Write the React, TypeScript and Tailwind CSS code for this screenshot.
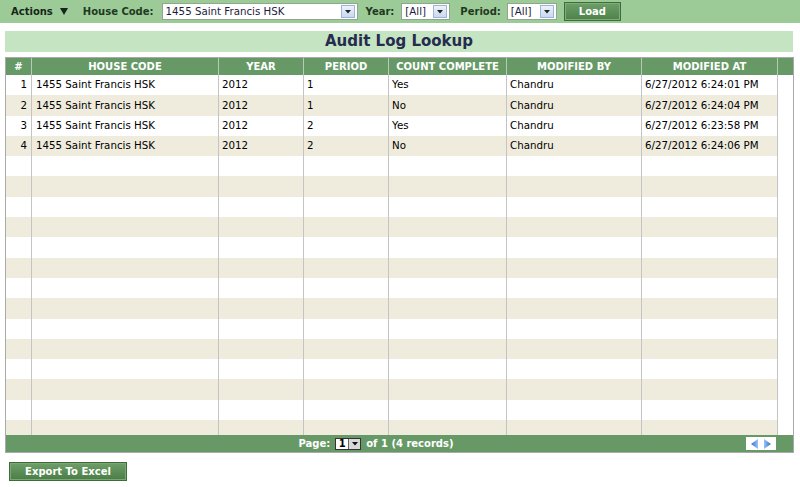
import React from "react";

const cols = [
  { w: "w-[26px]", label: "#" },
  { w: "w-[187px]", label: "HOUSE CODE" },
  { w: "w-[85px]", label: "YEAR" },
  { w: "w-[85px]", label: "PERIOD" },
  { w: "w-[118px]", label: "COUNT COMPLETE" },
  { w: "w-[135px]", label: "MODIFIED BY" },
  { w: "w-[136px]", label: "MODIFIED AT" },
];

const data = [
  ["1", "1455 Saint Francis HSK", "2012", "1", "Yes", "Chandru", "6/27/2012 6:24:01 PM"],
  ["2", "1455 Saint Francis HSK", "2012", "1", "No", "Chandru", "6/27/2012 6:24:04 PM"],
  ["3", "1455 Saint Francis HSK", "2012", "2", "Yes", "Chandru", "6/27/2012 6:23:58 PM"],
  ["4", "1455 Saint Francis HSK", "2012", "2", "No", "Chandru", "6/27/2012 6:24:06 PM"],
];

function DropBtn() {
  return (
    <div className="w-[14px] h-[13px] mr-[2px] border border-[#9fb4d6] bg-gradient-to-b from-[#eef3fb] to-[#c9d8ef] flex items-center justify-center">
      <svg width="6" height="4" viewBox="0 0 6 4">
        <path d="M0 0 L6 0 L3 3.5 Z" fill="#222" />
      </svg>
    </div>
  );
}

function Select({ w, text }: { w: string; text: string }) {
  return (
    <div className={`${w} h-[17px] bg-white border border-[#8fa88d] flex items-center justify-between`}>
      <span className="pl-[3px] text-[10.25px] text-[#1c1c3c] leading-none">{text}</span>
      <DropBtn />
    </div>
  );
}

export default function App() {
  const rows = Array.from({ length: 18 }, (_, i) => data[i] ?? ["", "", "", "", "", "", ""]);
  return (
    <div className="w-[800px] h-[487px] bg-white font-['DejaVu_Sans',sans-serif] text-[10.25px] text-black overflow-hidden">
      {/* Top bar */}
      <div className="h-[23px] bg-[#9dcb98] flex items-center pl-[11px]">
        <span className="font-bold text-[10px] text-[#16261a]">Actions</span>
        <svg className="ml-[7px]" width="8" height="7" viewBox="0 0 8 7">
          <path d="M0 0 L8 0 L4 7 Z" fill="#16261a" />
        </svg>
        <span className="ml-[15px] font-bold text-[10px] text-[#1f3a20]">House Code:</span>
        <div className="ml-[8px]">
          <Select w="w-[196px]" text="1455 Saint Francis HSK" />
        </div>
        <span className="ml-[8px] font-bold text-[10px] text-[#1f3a20]">Year:</span>
        <div className="ml-[7px]">
          <Select w="w-[49px]" text="[All]" />
        </div>
        <span className="ml-[10px] font-bold text-[10px] text-[#1f3a20]">Period:</span>
        <div className="ml-[6px]">
          <Select w="w-[50px]" text="[All]" />
        </div>
        <div className="ml-[7px] w-[57px] h-[19px] bg-gradient-to-b from-[#6e9f69] to-[#4e814a] border border-[#3f6b3c] shadow-[inset_0_0_0_1px_#7fae7a] flex items-center justify-center">
          <span className="font-bold text-[10px] text-white">Load</span>
        </div>
      </div>

      {/* Title */}
      <div className="mt-[8px] ml-[5px] w-[788px] h-[21px] bg-[#c5e4c1] flex items-center justify-center">
        <span className="font-bold text-[15px] text-[#262b50] leading-none">Audit Log Lookup</span>
      </div>

      {/* Table */}
      <div className="mt-[5px] ml-[5px] w-[789px] border border-[#a9a9a9]">
        <div className="flex h-[17px] bg-[#669966]">
          {cols.map((c, i) => (
            <div key={i} className={`${c.w} border-r border-[#b9c9b7] flex items-center justify-center font-bold text-[10px] text-white`}>
              {c.label}
            </div>
          ))}
          <div className="w-[15px]" />
        </div>
        <div className="h-[360px] overflow-hidden">
          {rows.map((r, ri) => (
            <div key={ri} className={`flex h-[20.3px] ${ri % 2 === 1 ? "bg-[#efecdd]" : "bg-white"}`}>
              {cols.map((c, ci) => (
                <div
                  key={ci}
                  className={`${c.w} border-r border-[#c4c4c4] flex items-center ${ci === 0 ? "justify-end pr-[4px]" : ci === 1 ? "pl-[4px]" : "pl-[3px]"} whitespace-nowrap`}
                >
                  {r[ci]}
                </div>
              ))}
              <div className="w-[15px] bg-white" />
            </div>
          ))}
        </div>
        <div className="flex h-[17px] bg-[#669966] items-center">
          <div className="flex-1 flex items-center justify-center font-bold text-[10px] text-white">
            <span>Page:</span>
            <div className="ml-[5px] h-[12px] flex items-center border border-[#333] bg-white">
              <span className="w-[12px] text-center text-black text-[10px] font-bold leading-none">1</span>
              <div className="w-[12px] h-[10px] bg-[#d9d9d9] border-l border-[#666] flex items-center justify-center">
                <svg width="6" height="4" viewBox="0 0 6 4">
                  <path d="M0 0 L6 0 L3 3.5 Z" fill="#111" />
                </svg>
              </div>
            </div>
            <span className="ml-[5px]">of 1 (4 records)</span>
          </div>
          <div className="w-[30px] h-[13px] bg-white flex items-center justify-between px-[5px] mr-[17px]">
            <svg width="7" height="10" viewBox="0 0 7 10">
              <defs>
                <linearGradient id="ga" x1="0" x2="1">
                  <stop offset="0" stopColor="#2f6fd6" />
                  <stop offset="1" stopColor="#9cc2f3" />
                </linearGradient>
              </defs>
              <path d="M7 0 L0 5 L7 10 Z" fill="url(#ga)" />
            </svg>
            <svg width="7" height="10" viewBox="0 0 7 10">
              <defs>
                <linearGradient id="gb" x1="0" x2="1">
                  <stop offset="0" stopColor="#9cc2f3" />
                  <stop offset="1" stopColor="#2f6fd6" />
                </linearGradient>
              </defs>
              <path d="M0 0 L7 5 L0 10 Z" fill="url(#gb)" />
            </svg>
          </div>
        </div>
      </div>

      {/* Export */}
      <div className="mt-[9px] ml-[9px] w-[118px] h-[19px] bg-gradient-to-b from-[#6e9f69] to-[#4a7c46] border border-[#3f6b3c] shadow-[inset_0_0_0_1px_#79a874] flex items-center justify-center">
        <span className="font-bold text-[10px] text-white">Export To Excel</span>
      </div>
    </div>
  );
}
